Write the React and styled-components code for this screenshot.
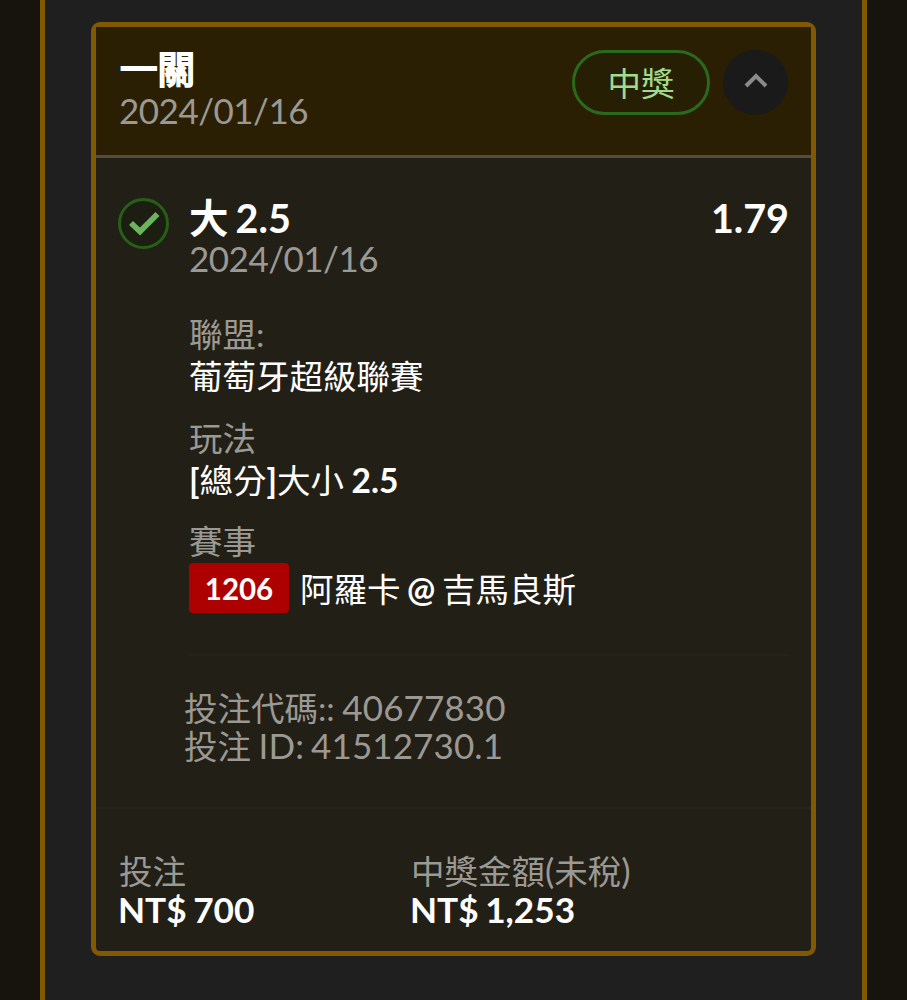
import styled, { createGlobalStyle } from 'styled-components'

const App = () => {
  return (
    <Page>
      <GlobalStyle />
      <Panel>
        <Card>
          <Header>
            <Heading>
              <Title>一關</Title>
              <Muted $line={40}><DateText>2024/01/16</DateText></Muted>
            </Heading>
            <Status>中獎</Status>
            <Toggle aria-label="收合">
              <svg width="24" height="17" viewBox="0 0 24 17" fill="none" stroke="#8b8b8b" strokeWidth="4">
                <path d="M2 14 L12 4 L22 14" />
              </svg>
            </Toggle>
          </Header>

          <Bet>
            <Check>
              <svg width="32" height="26" viewBox="0 0 32 26" fill="none" stroke="#6bb35c" strokeWidth="5.8">
                <path d="M3 12 L12 20.5 L29.5 3" strokeLinejoin="miter" />
              </svg>
            </Check>
            <Details>
              <Pick>
                <span>大 2.5</span>
                <Odds>1.79</Odds>
              </Pick>
              <Muted $line={40}><DateText>2024/01/16</DateText></Muted>
              <Field $top={35}>
                <Muted $line={41}>聯盟:</Muted>
                <Value>葡萄牙超級聯賽</Value>
              </Field>
              <Field $top={21}>
                <Muted $line={41}>玩法</Muted>
                <Value><b>[</b>總分<b>]</b>大小 <b>2.5</b></Value>
              </Field>
              <Field $top={20}>
                <Muted $line={41}>賽事</Muted>
                <Match>
                  <Code>1206</Code>
                  <Value>阿羅卡 <b>@</b> 吉馬良斯</Value>
                </Match>
              </Field>
              <Divider />
              <Ids>
                <Muted $line={38}>投注代碼:: <Num>40677830</Num></Muted>
                <Muted $line={38}>投注 <Num>ID: 41512730.1</Num></Muted>
              </Ids>
            </Details>
          </Bet>

          <Footer>
            <div>
              <Muted $line={37}>投注</Muted>
              <Amount>NT$ 700</Amount>
            </div>
            <div>
              <Muted $line={37}>中獎金額<Paren>(</Paren>未稅<Paren>)</Paren></Muted>
              <Amount>NT$ 1,253</Amount>
            </div>
          </Footer>
        </Card>
      </Panel>
    </Page>
  )
}

const GlobalStyle = createGlobalStyle`
* {
  box-sizing: border-box;
}
body {
  margin: 0;
  background: #17140d;
  font-family: Lato, "Noto Sans CJK TC", sans-serif;
  font-size: 33.5px;
  color: #fff;
}
`

const Page = styled.div`
height: 1000px;
padding: 0 40px;
overflow: hidden;
`

const Panel = styled.main`
height: 100%;
padding: 22px 46px 0;
background: #1f1f1f;
border: solid #805902;
border-width: 0 5px;
`

const Card = styled.article`
display: flex;
flex-direction: column;
width: 725px;
height: 934px;
background: #221f17;
border: 5px solid #805902;
border-radius: 9px;
`

const Header = styled.header`
display: flex;
height: 131px;
padding: 21px 23px 0;
background: #2a1f03;
border-bottom: 3px solid #544e42;
`

const Heading = styled.div`
flex: 1;
`

const Title = styled.h2`
margin: 0 0 0 1px;
font-size: 37.5px;
font-weight: 400;
line-height: 42px;
-webkit-text-stroke: 2px #fff;
`

const Muted = styled.div`
color: #9b9994;
line-height: ${({ $line }) => $line}px;
white-space: nowrap;
word-spacing: -1px;
`

const Num = styled.span`
font-size: 35px;
letter-spacing: 0.1px;
line-height: 1;
word-spacing: -2px;
`

const DateText = styled.span`
font-size: 35px;
letter-spacing: -0.5px;
`

const Status = styled.div`
width: 138px;
height: 65px;
margin-top: 2px;
border: 3px solid #2a6a1a;
border-radius: 33px;
background: #271f03;
color: #a0dc8c;
line-height: 60px;
text-align: center;
`

const Toggle = styled.button`
display: flex;
align-items: center;
justify-content: center;
width: 65px;
height: 65px;
margin: 2px 0 0 13px;
padding: 0 0 5px;
border: 0;
border-radius: 50%;
background: #1a1a1a;
`

const Bet = styled.section`
display: flex;
height: 651px;
padding: 40px 23px 0 22px;
border-bottom: 2px solid #26231c;
`

const Check = styled.div`
display: flex;
align-items: center;
justify-content: center;
width: 51px;
height: 51px;
border: 3px solid #265f18;
border-radius: 50%;
background: #1c1e12;
`

const Details = styled.div`
flex: 1;
margin-left: 20px;
`

const Pick = styled.div`
display: flex;
justify-content: space-between;
font-size: 39.5px;
font-weight: 700;
line-height: 40px;
word-spacing: -2.5px;
`

const Odds = styled.span`
margin-right: -1px;
`

const Field = styled.div`
margin-top: ${({ $top }) => $top}px;
`

const Value = styled.div`
line-height: 42px;
white-space: nowrap;
word-spacing: -1px;
`

const Match = styled.div`
display: flex;
align-items: center;
height: 50px;
margin-top: 1px;

${Value} {
  padding-top: 2px;
  word-spacing: -2px;
}
`

const Code = styled.span`
width: 100px;
height: 50px;
margin-right: 11px;
border-radius: 4px;
background: #ad0000;
font-size: 29.5px;
font-weight: 700;
line-height: 52px;
text-align: center;
`

const Divider = styled.hr`
margin: 41px 0 0;
border: 0;
border-top: 2px solid #26231c;
`

const Ids = styled.div`
margin: 33px 0 0 -5px;
`

const Footer = styled.footer`
display: grid;
grid-template-columns: 292px 1fr;
padding: 44px 23px 0;
`

const Paren = styled.span`
font-size: 35px;
line-height: 1;
`

const Amount = styled.div`
margin-left: -1px;
font-size: 35.2px;
font-weight: 700;
line-height: 38px;
word-spacing: -2px;
`

export default App
